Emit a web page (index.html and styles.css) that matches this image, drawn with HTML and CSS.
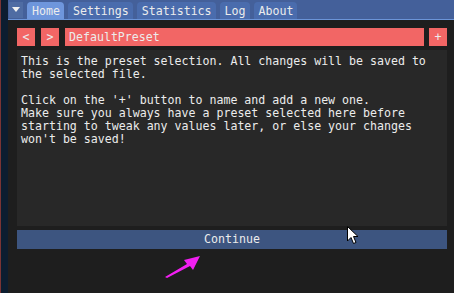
FILE: index.html
```html
<!DOCTYPE html>
<html lang="en">
<head>
    <meta charset="UTF-8">
    <title>Presets</title>
    <link rel="stylesheet" href="styles.css">
</head>
<body>
    <div class="desk-edge"></div>
    <div class="window">
        <div class="tabbar">
            <div class="collapse"><span class="tri"></span></div>
            <div class="tab active">Home</div>
            <div class="tab">Settings</div>
            <div class="tab">Statistics</div>
            <div class="tab">Log</div>
            <div class="tab">About</div>
        </div>
        <div class="content">
            <div class="preset-row">
                <button class="btn small">&lt;</button>
                <button class="btn small">&gt;</button>
                <div class="combo">DefaultPreset</div>
                <button class="btn small">+</button>
            </div>
            <div class="child">
                <p>This is the preset selection. All changes will be saved to<br>the selected file.</p>
                <p>Click on the '+' button to name and add a new one.<br>Make sure you always have a preset selected here before<br>starting to tweak any values later, or else your changes<br>won't be saved!</p>
            </div>
            <button class="continue">Continue</button>
        </div>
    </div>

    <!-- mouse cursor over the button -->
    <svg class="cursor" width="12" height="20" viewBox="0 0 12 20">
        <path d="M0.5 0.5 L0.5 15 L4 11.5 L6.5 17.5 L9 16.5 L6.5 10.5 L11 10.5 Z" fill="#fff" stroke="#000" stroke-width="1"/>
    </svg>

    <!-- annotation arrow -->
    <svg class="pointer" width="40" height="24" viewBox="0 0 40 24">
        <path d="M0 23 L22 10 L19 6 L35 2 L28 16 L25 12 L2 24 Z" fill="#f21ff2"/>
    </svg>
</body>
</html>
```

FILE: styles.css
```css
body {
    margin: 0;
    width: 454px;
    height: 293px;
    overflow: hidden;
    display: flex;
    background-color: #1e1e1e;
    font-family: 'DejaVu Sans Mono', 'Liberation Mono', monospace;
    font-size: 11.6px;
    line-height: 13px;
    color: #ececec;
}
.desk-edge {
    width: 7px;
    background-color: #0c1d30;
    border-left: 1px solid #7a3434;
}
.window {
    flex: 1;
    display: flex;
    flex-direction: column;
    background-color: #1e1e1e;
}
.tabbar {
    height: 20px;
    box-sizing: border-box;
    display: flex;
    align-items: flex-end;
    gap: 4px;
    padding-left: 1px;
    background-color: #44609a;
    border-bottom: 1px solid #6b94d8;
}
.collapse {
    width: 14px;
    height: 16px;
    align-self: center;
    background-color: #4f6ca3;
    display: flex;
    align-items: center;
    justify-content: center;
}
.tri {
    width: 0;
    height: 0;
    border-left: 4px solid transparent;
    border-right: 4px solid transparent;
    border-top: 5px solid #f0f0f0;
}
.tab {
    height: 17px;
    padding: 0 4px 0 5px;
    border-radius: 4px 4px 0 0;
    background-color: #4a6cad;
    line-height: 18px;
}
.tab.active {
    background-color: #6e96dc;
}
.content {
    padding: 8px 7px 0 9px;
    display: flex;
    flex-direction: column;
}
.preset-row {
    display: flex;
    height: 18px;
    gap: 6px;
}
.btn {
    border: none;
    padding: 0;
    font: inherit;
    color: #ececec;
    background-color: #f26665;
}
.small {
    width: 18px;
}
.combo {
    flex: 1;
    margin-right: -1px;
    background-color: #f26665;
    padding-left: 4px;
    line-height: 18px;
}
.child {
    margin-top: 4px;
    height: 176px;
    box-sizing: border-box;
    padding: 5px 4px;
    background-color: #282828;
}
.child p {
    margin: 0 0 13px 0;
}
.continue {
    margin-top: 4px;
    height: 19px;
    border: none;
    padding: 0;
    font: inherit;
    color: #ececec;
    background-color: #3d5580;
}
.cursor {
    position: absolute;
    left: 347px;
    top: 226px;
}
.pointer {
    position: absolute;
    left: 165px;
    top: 254px;
}
```
